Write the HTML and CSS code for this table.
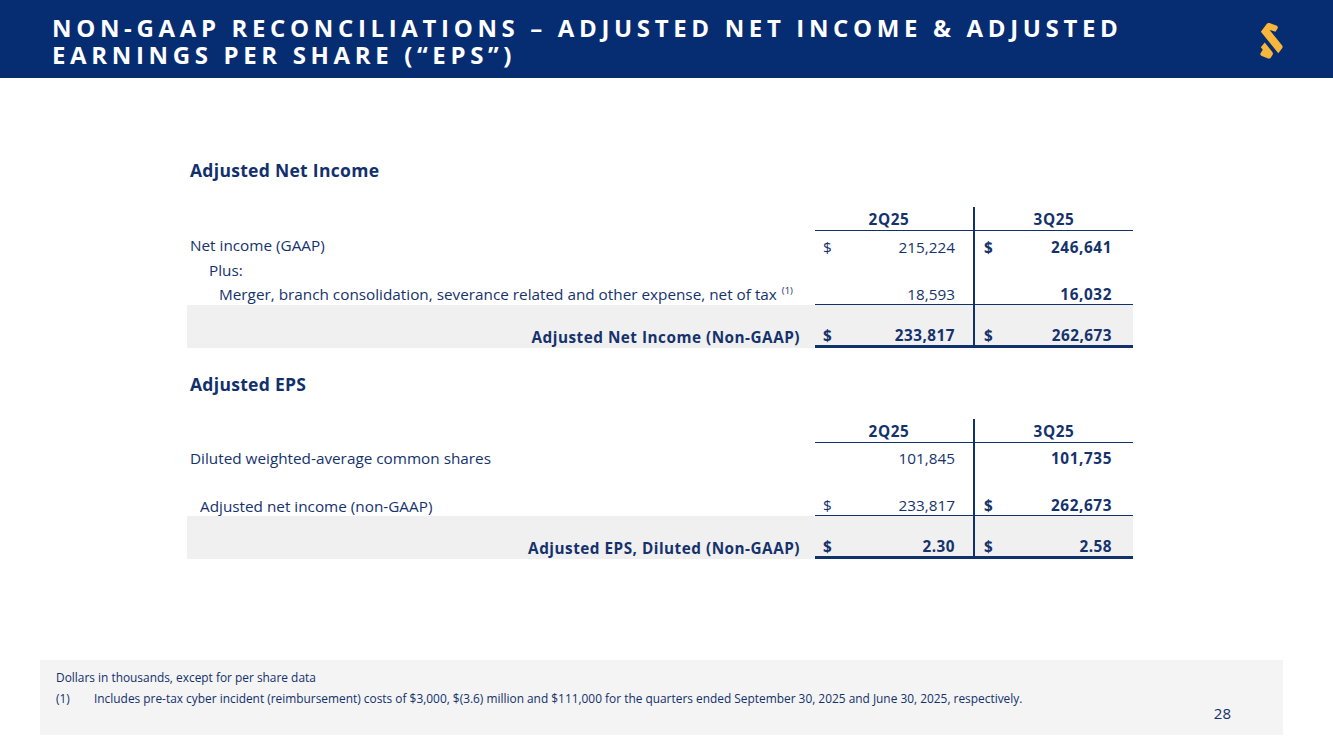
FILE: index.html
```html
<!DOCTYPE html>
<html lang="en">
<head>
<meta charset="utf-8">
<title>Non-GAAP Reconciliations</title>
<link rel="stylesheet" href="styles.css">
</head>
<body>
<div class="slide">
  <header class="topbar">
    <h1 class="title"><span class="tline">NON-GAAP RECONCILIATIONS – ADJUSTED NET INCOME &amp; ADJUSTED</span><span class="tline">EARNINGS PER SHARE (“EPS”)</span></h1>
    <svg class="logo" viewBox="0 0 32 42" width="31" height="41" aria-hidden="true">
      <path d="M5 11 L11 3 Q12 1.5 14 2 L21 4.5 Q23.5 5.5 22 8 L20 11 L14 9 L27 25 Q28 26.5 27 28 L23 33 L5 11 Z" fill="#f6b73c"/>
      <path d="M5 27 L9 22 L17 32 Q18 33.5 17 35 L15 38 Q14 39 12.5 38.5 L6 36 Q3.5 35 5 32.5 L7 29.5 Z" fill="#f6b73c"/>
    </svg>
  </header>

  <main class="content">
    <section class="block block-first">
      <h2 class="heading">Adjusted Net Income</h2>
      <div class="table">
        <div class="cell label hdr"></div>
        <div class="cell hdr col2">2Q25</div>
        <div class="cell hdr col3">3Q25</div>

        <div class="cell label r1"><span>Net income (GAAP)</span></div>
        <div class="cell val col2 r1"><span>$</span><span>215,224</span></div>
        <div class="cell val col3 r1 b"><span>$</span><span>246,641</span></div>

        <div class="cell label r2 ind1"><span>Plus:</span></div>
        <div class="cell val col2 r2"></div>
        <div class="cell val col3 r2"></div>

        <div class="cell label r3 ind2"><span>Merger, branch consolidation, severance related and other expense, net of tax<sup>(1)</sup></span></div>
        <div class="cell val col2 r3 line"><span></span><span>18,593</span></div>
        <div class="cell val col3 r3 line b"><span></span><span>16,032</span></div>

        <div class="cell label total"><span>Adjusted Net Income (Non-GAAP)</span></div>
        <div class="cell val col2 total tb"><span>$</span><span>233,817</span></div>
        <div class="cell val col3 total tb"><span>$</span><span>262,673</span></div>
      </div>
    </section>

    <section class="block block-second">
      <h2 class="heading">Adjusted EPS</h2>
      <div class="table">
        <div class="cell label hdr"></div>
        <div class="cell hdr col2">2Q25</div>
        <div class="cell hdr col3">3Q25</div>

        <div class="cell label e1"><span>Diluted weighted-average common shares</span></div>
        <div class="cell val col2 e1"><span></span><span>101,845</span></div>
        <div class="cell val col3 e1 b"><span></span><span>101,735</span></div>

        <div class="cell label e2 ind0"><span>Adjusted net income (non-GAAP)</span></div>
        <div class="cell val col2 e2 line"><span>$</span><span>233,817</span></div>
        <div class="cell val col3 e2 line b"><span>$</span><span>262,673</span></div>

        <div class="cell label total"><span>Adjusted EPS, Diluted (Non-GAAP)</span></div>
        <div class="cell val col2 total tb"><span>$</span><span>2.30</span></div>
        <div class="cell val col3 total tb"><span>$</span><span>2.58</span></div>
      </div>
    </section>
  </main>

  <footer class="notes">
    <p class="note">Dollars in thousands, except for per share data</p>
    <p class="note"><span class="fn">(1)</span>Includes pre-tax cyber incident (reimbursement) costs of $3,000, $(3.6) million and $111,000 for the quarters ended September 30, 2025 and June 30, 2025, respectively.</p>
    <div class="page">28</div>
  </footer>
</div>
</body>
</html>
```

FILE: styles.css
```css
* { box-sizing: border-box; }
html, body { margin: 0; padding: 0; background: #ffffff; }
body { font-family: "Open Sans", "Noto Sans", sans-serif; color: #12306b; }

.slide { width: 1333px; height: 749px; position: relative; overflow: hidden; }

.topbar {
  height: 78px;
  background: #062c72;
  display: flex;
  align-items: flex-start;
  justify-content: space-between;
  padding: 14px 46px 0 52px;
}
.title {
  margin: 0;
  color: #ffffff;
  font-weight: 700;
  font-size: 24px;
  line-height: 27px;
  letter-spacing: 4.65px;
}
.tline { display: block; height: 27px; }
.logo { margin-top: 7px; }

.content { padding-left: 187px; }
.block-first { padding-top: 80px; }
.block-second { padding-top: 24px; }

.heading {
  margin: 0 0 0 3px;
  font-size: 17.5px;
  font-weight: 700;
  letter-spacing: 0.3px;
  line-height: 24px;
  height: 24px;
}
.block-first .heading { margin-bottom: 25px; }
.block-second .heading { margin-bottom: 23px; }

.table {
  display: grid;
  grid-template-columns: 628px 158px 160px;
  font-size: 15.3px;
  line-height: 20px;
  color: #15326c;
}
.cell { display: flex; align-items: flex-end; }
.label { padding-left: 3px; white-space: nowrap; }
.label sup { font-size: 9.5px; margin-left: 5px; vertical-align: 6px; line-height: 0; }
.ind0 { padding-left: 13px; }
.ind1 { padding-left: 22px; }
.ind2 { padding-left: 32px; }

.hdr { height: 24px; font-weight: 700; letter-spacing: 0.6px; padding-bottom: 1px; }
.hdr.col2, .hdr.col3 { justify-content: center; border-bottom: 1.5px solid #12306b; }
.hdr.col2 { padding-right: 10px; }

.col3 { border-left: 2px solid #12306b; }
.val { justify-content: space-between; }
.val.col2 { padding: 0 18px 0 8px; }
.val.col3 { padding: 0 21px 0 9px; }
.b { font-weight: 700; letter-spacing: 0.6px; }

.r1 { height: 26px; padding-bottom: 2px; }
.r2 { height: 25px; padding-bottom: 2px; }
.r3 { height: 23px; padding-bottom: 1px; }
.line { border-bottom: 1.5px solid #12306b; }

.e1 { height: 25px; }
.e2 { height: 48px; }

.total {
  height: 43px;
  background: #f0f0f0;
  font-weight: 700;
  letter-spacing: 0.5px;
  padding-bottom: 1px;
}
.label.total { justify-content: flex-end; padding-right: 15px; }
.tb { border-bottom: 3px solid #12306b; }

.notes {
  position: absolute;
  left: 40px;
  top: 660px;
  width: 1243px;
  height: 75px;
  background: #f4f4f4;
  padding: 9px 16px 0 16px;
  color: #12306b;
}
.note {
  margin: 0 0 5px 0;
  font-size: 11.9px;
  line-height: 16px;
  white-space: nowrap;
}
.fn { display: inline-block; width: 38px; }
.page {
  position: absolute;
  right: 52px;
  bottom: 12px;
  font-size: 15px;
  line-height: 20px;
}
```
